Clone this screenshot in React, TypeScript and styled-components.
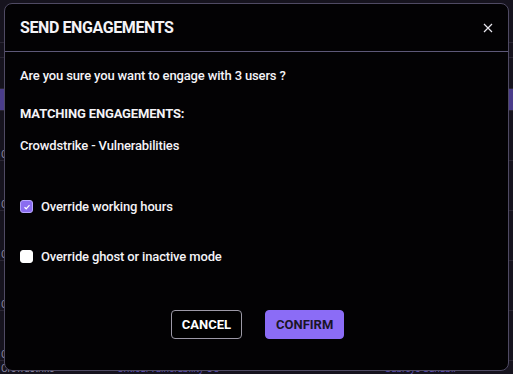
import React, { useState } from 'react';
import styled, { createGlobalStyle } from 'styled-components';

const GlobalStyle = createGlobalStyle`
    html, body {
        margin:0;
        padding:0;
        background:#16131e;
        font-family:Roboto, "Liberation Sans", sans-serif;
    }
`

const Page = styled.div`
    position:relative;
    width:513px;
    height:374px;
    overflow:hidden;
    background:#16131e;
`

const Table = styled.div`
    display:flex;
    flex-direction:column;
    padding-top:42px;
`

const Row = styled.div<{ $active?: boolean; $h: number }>`
    height:${props => props.$h}px;
    box-sizing:border-box;
    border-top:1px solid #2a2634;
    background:${props => props.$active ? '#4a3c8a' : 'transparent'};
    display:grid;
    grid-template-columns:116px 268px 1fr;
    align-items:end;
    padding-left:1px;
    font-size:10px;
    line-height:10px;
    color:#8a86a0;
`

const Cell = styled.span<{ $color?: string }>`
    color:${props => props.$color ?? '#8a86a0'};
    white-space:nowrap;
    overflow:hidden;
`

const Overlay = styled.div`
    position:absolute;
    inset:0;
    padding:3px 4px;
    display:flex;
    align-items:flex-start;
`

const Modal = styled.div`
    width:505px;
    height:368px;
    box-sizing:border-box;
    background:#030204;
    border:1px solid #4f4a63;
    border-radius:8px;
    display:flex;
    flex-direction:column;
    color:#f4f3f7;
`

const Header = styled.div`
    height:48px;
    box-sizing:border-box;
    border-bottom:1px solid #5d5878;
    display:flex;
    align-items:center;
    justify-content:space-between;
    padding:0 14px 0 15px;
`

const Title = styled.h2`
    margin:0;
    font-size:16px;
    font-weight:700;
    letter-spacing:-0.4px;
`

const Close = styled.button`
    background:none;
    border:none;
    padding:0;
    width:12px;
    height:12px;
    display:flex;
    align-items:center;
    justify-content:center;
    cursor:pointer;
`

const Body = styled.div`
    flex:1;
    display:flex;
    flex-direction:column;
    padding:16px 15px 0 15px;
`

const Text = styled.p<{ $bold?: boolean; $gap?: number }>`
    margin:0 0 ${props => props.$gap ?? 0}px 0;
    font-size:13px;
    line-height:16px;
    font-weight:${props => props.$bold ? 700 : 500};
    letter-spacing:-0.15px;
`

const CheckRow = styled.label<{ $gap?: number }>`
    display:flex;
    align-items:center;
    gap:8px;
    margin-bottom:${props => props.$gap ?? 0}px;
    font-size:13px;
    font-weight:500;
    letter-spacing:-0.15px;
    cursor:pointer;
`

const Box = styled.span<{ $checked: boolean }>`
    width:13px;
    height:13px;
    box-sizing:border-box;
    border-radius:3px;
    background:${props => props.$checked ? '#8a6cf0' : '#ffffff'};
    border:1px solid ${props => props.$checked ? '#b9a8ff' : '#ffffff'};
    display:flex;
    align-items:center;
    justify-content:center;
`

const Actions = styled.div`
    display:flex;
    justify-content:center;
    gap:23px;
    padding-left:2px;
`

const Button = styled.button<{ $primary?: boolean }>`
    height:29px;
    box-sizing:border-box;
    padding:0 10px;
    border-radius:4px;
    border:1px solid ${props => props.$primary ? '#8b6cf6' : '#9c99a6'};
    background:${props => props.$primary ? '#8b6cf6' : '#000000'};
    color:${props => props.$primary ? '#1a1526' : '#ffffff'};
    font-family:Roboto, "Liberation Sans", sans-serif;
    font-size:13px;
    font-weight:700;
    cursor:pointer;
`

const Check = () => (
    <svg width="8" height="8" viewBox="0 0 8 8">
        <path d="M1.5 4.2L3.2 5.8L6.5 2.2" stroke="#fff" strokeWidth="1.2" fill="none" />
    </svg>
)

const App = () => {
    const [hours, setHours] = useState(true);
    const [ghost, setGhost] = useState(false);

    return (
        <Page>
            <GlobalStyle />
            <Table>
                <Row $h={15} />
                <Row $h={31} />
                <Row $h={22} $active />
                {[0, 1, 2, 3, 4].map(i => (
                    <Row key={i} $h={50}>
                        <Cell>C</Cell>
                    </Row>
                ))}
                <Row $h={14}>
                    <Cell>Crowdstrike</Cell>
                    <Cell $color="#5d4fb0">Critical vulnerability OU</Cell>
                    <Cell $color="#5d4fb0">Subreys Sanabil</Cell>
                </Row>
            </Table>
            <Overlay>
                <Modal>
                    <Header>
                        <Title>SEND ENGAGEMENTS</Title>
                        <Close aria-label="close">
                            <svg width="10" height="10" viewBox="0 0 10 10">
                                <path d="M1 1L9 9M9 1L1 9" stroke="#e8e6ee" strokeWidth="1.2" />
                            </svg>
                        </Close>
                    </Header>
                    <Body>
                        <Text $gap={22}>Are you sure you want to engage with 3 users ?</Text>
                        <Text $bold $gap={16}>MATCHING ENGAGEMENTS:</Text>
                        <Text $gap={45}>Crowdstrike - Vulnerabilities</Text>
                        <CheckRow $gap={35} onClick={() => setHours(!hours)}>
                            <Box $checked={hours}>{hours && <Check />}</Box>
                            Override working hours
                        </CheckRow>
                        <CheckRow $gap={46} onClick={() => setGhost(!ghost)}>
                            <Box $checked={ghost}>{ghost && <Check />}</Box>
                            Override ghost or inactive mode
                        </CheckRow>
                        <Actions>
                            <Button>CANCEL</Button>
                            <Button $primary>CONFIRM</Button>
                        </Actions>
                    </Body>
                </Modal>
            </Overlay>
        </Page>
    )
}

export default App;
